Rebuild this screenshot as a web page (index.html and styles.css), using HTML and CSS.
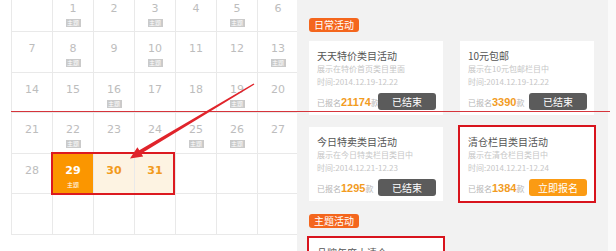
FILE: index.html
```html
<!DOCTYPE html>
<html lang="zh-CN">
<head>
    <meta charset="UTF-8">
    <title>活动日历</title>
    <link rel="stylesheet" href="styles.css">
</head>
<body>
    <div class="cal">
        <div class="cal-grid">
            <div class="day"></div>
            <div class="day"><span class="num">1</span><span class="tag-s">主题</span></div>
            <div class="day"><span class="num">2</span></div>
            <div class="day"><span class="num">3</span><span class="tag-s">主题</span></div>
            <div class="day"><span class="num">4</span></div>
            <div class="day"><span class="num">5</span><span class="tag-s">主题</span></div>
            <div class="day"><span class="num">6</span></div>

            <div class="day"><span class="num">7</span></div>
            <div class="day"><span class="num">8</span><span class="tag-s">主题</span></div>
            <div class="day"><span class="num">9</span></div>
            <div class="day"><span class="num">10</span><span class="tag-s">主题</span></div>
            <div class="day"><span class="num">11</span></div>
            <div class="day"><span class="num">12</span></div>
            <div class="day"><span class="num">13</span><span class="tag-s">主题</span></div>

            <div class="day"><span class="num">14</span></div>
            <div class="day"><span class="num">15</span></div>
            <div class="day"><span class="num">16</span><span class="tag-s">主题</span></div>
            <div class="day"><span class="num">17</span></div>
            <div class="day"><span class="num">18</span></div>
            <div class="day"><span class="num">19</span><span class="tag-s">主题</span></div>
            <div class="day"><span class="num">20</span></div>

            <div class="day"><span class="num">21</span></div>
            <div class="day"><span class="num">22</span><span class="tag-s">主题</span></div>
            <div class="day"><span class="num">23</span></div>
            <div class="day"><span class="num">24</span></div>
            <div class="day"><span class="num">25</span><span class="tag-s">主题</span></div>
            <div class="day"><span class="num">26</span><span class="tag-s">主题</span></div>
            <div class="day"><span class="num">27</span></div>

            <div class="day"><span class="num">28</span></div>
            <div class="day today"><span class="num">29</span><span class="tag-s">主题</span></div>
            <div class="day soon"><span class="num">30</span></div>
            <div class="day soon"><span class="num">31</span></div>
            <div class="day"></div>
            <div class="day"></div>
            <div class="day"></div>

            <div class="day"></div>
            <div class="day"></div>
            <div class="day"></div>
            <div class="day"></div>
            <div class="day"></div>
            <div class="day"></div>
            <div class="day"></div>
        </div>
        <div class="pick-box"></div>
    </div>

    <div class="panel">
        <div class="label">日常活动</div>
        <div class="cards">
            <div class="card">
                <div class="card-title">天天特价类目活动</div>
                <div class="card-text">展示在特价首页类目里面</div>
                <div class="card-text">时间:2014.12.19-12.22</div>
                <div class="card-foot">
                    <span class="joined">已报名<b>21174</b>款</span>
                    <span class="btn">已结束</span>
                </div>
            </div>
            <div class="card">
                <div class="card-title">10元包邮</div>
                <div class="card-text">展示在10元包邮栏目中</div>
                <div class="card-text">时间:2014.12.19-12.22</div>
                <div class="card-foot">
                    <span class="joined">已报名<b>3390</b>款</span>
                    <span class="btn">已结束</span>
                </div>
            </div>
            <div class="card">
                <div class="card-title">今日特卖类目活动</div>
                <div class="card-text">展示在今日特卖栏目类目中</div>
                <div class="card-text">时间:2014.12.21-12.23</div>
                <div class="card-foot">
                    <span class="joined">已报名<b>1295</b>款</span>
                    <span class="btn">已结束</span>
                </div>
            </div>
            <div class="card marked">
                <div class="card-title">清仓栏目类目活动</div>
                <div class="card-text">展示在清仓栏目类目中</div>
                <div class="card-text">时间:2014.12.21-12.24</div>
                <div class="card-foot">
                    <span class="joined">已报名<b>1384</b>款</span>
                    <span class="btn open">立即报名</span>
                </div>
            </div>
        </div>

        <div class="label">主题活动</div>
        <div class="cards theme">
            <div class="card marked">
                <div class="card-title">品牌年度大清仓</div>
                <div class="card-text">展示在主题活动页面中</div>
            </div>
        </div>
    </div>
    <div class="edge"></div>

    <!-- annotations drawn over the screenshot -->
    <div class="mark-line"></div>
    <svg class="arrow" viewBox="0 0 616 251">
        <polygon fill="#e0242b" points="253.6,83.5 254.4,84.5 141.3,153.5 143.2,156.5 130,158.5 137.4,147.3 139.3,150.3"/>
    </svg>
</body>
</html>
```

FILE: styles.css
```css
* { box-sizing: border-box; margin: 0; padding: 0; }
body { display: flex; height: 251px; overflow: hidden; position: relative; background: #fff; font-family: "Noto Sans CJK SC", sans-serif; }

/* calendar */
.cal { flex: none; width: 297px; padding-left: 11px; overflow: hidden; position: relative; }
.cal-grid { display: grid; grid-template-columns: repeat(7, 41px); grid-auto-rows: 40.5px; width: max-content; margin-top: -8.5px; border-left: 1px solid #e9e9e9; }
.day { display: flex; flex-direction: column; align-items: center; padding-top: 10px; border-right: 1px solid #e9e9e9; border-bottom: 1px solid #e9e9e9; }
.num { font: 11px/14px "DejaVu Sans", sans-serif; color: #bdbdbd; }
.tag-s { margin-top: 3px; width: 15px; height: 8px; background: #cacaca; color: #fff; font-size: 6px; line-height: 8px; text-align: center; }
.day.today { background: #fb9600; }
.day.today .num { color: #fff; font-weight: bold; }
.day.today .tag-s { background: none; }
.day.soon { background: #fdf3e2; }
.day.soon .num { color: #f29a1c; font-weight: bold; }
.pick-box { position: absolute; left: 51px; top: 152px; width: 124px; height: 43px; border: 2px solid #dc1a20; }

/* activity panel */
.panel { flex: none; width: 311px; display: flex; flex-direction: column; align-items: flex-start; padding: 18px 0 0 12px; background: #f2f2f2; }
.label { height: 14px; padding: 0 5px; border-radius: 3px; background: #f4661d; color: #fff; font-size: 10px; line-height: 14px; }
.cards { display: grid; grid-template-columns: 134px 134px; gap: 12px 17px; margin: 9px 0 13px; }
.cards.theme { margin-top: 10px; }
.card { display: flex; flex-direction: column; height: 74px; padding: 8px 7px 5px 8px; background: #fff; }
.card.marked { outline: 2px solid #d8141d; }
.card-title { font-size: 10px; line-height: 13px; color: #555; white-space: nowrap; }
.card-text { font-size: 8px; line-height: 13px; color: #c6c6c6; white-space: nowrap; }
.card-foot { display: flex; align-items: center; height: 17px; margin-top: 5px; }
.joined { flex: 1; min-width: 0; white-space: nowrap; font-size: 8px; color: #b5b5b5; }
.joined b { font: bold 11px "Liberation Sans", sans-serif; color: #f29c1f; }
.btn { flex: none; width: 58px; height: 17px; border-radius: 3px; background: #5b5b5b; color: #fff; font-size: 10px; line-height: 17px; text-align: center; }
.btn.open { background: #fb9b13; }

.edge { flex: 1; background: #fafafa; }

.mark-line { position: absolute; left: 11px; top: 111px; width: 599px; height: 1px; background: #d6343b; }
.arrow { position: absolute; left: 0; top: 0; width: 616px; height: 251px; pointer-events: none; }
```
